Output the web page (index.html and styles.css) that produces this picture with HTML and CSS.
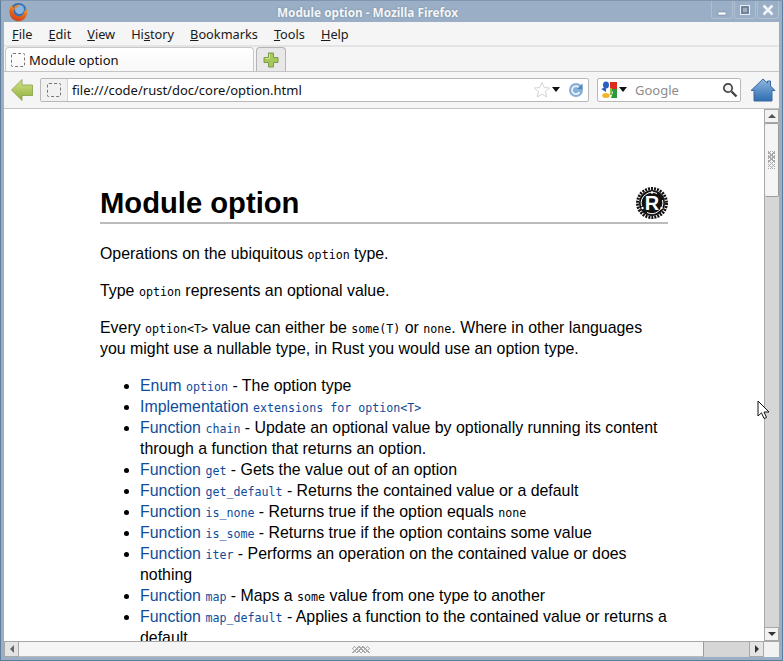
FILE: index.html
```html
<!DOCTYPE html>
<html lang="en">
<head>
<meta charset="utf-8">
<title>Module option - Mozilla Firefox</title>
<link rel="stylesheet" href="styles.css">
</head>
<body>
<div class="window">
  <header class="titlebar">
    <svg class="fx-logo" width="20" height="20" viewBox="0 0 20 20">
      <defs><linearGradient id="fx" x1="0.700" y1="0" x2="0.300" y2="1"><stop offset="0" stop-color="#f6b53a"/><stop offset=".5" stop-color="#e8681c"/><stop offset="1" stop-color="#c9421a"/></linearGradient></defs>
      <circle cx="10.500" cy="9.500" r="8.500" fill="#3c6fae"/>
      <circle cx="11.500" cy="7.500" r="4.500" fill="#8ab6e0"/>
      <path d="M4 2.500C2 5 1 8 1.500 11.500C2.500 16.500 6.500 19.500 11 19.300C15.500 19 18.700 15.500 19 11C19.100 9 18.600 7 17.700 5.500C17.800 7.500 17 9 15.800 10C15.800 12.500 13.500 14.500 10.500 14.300C7.500 14 5.800 12 5.800 9.500C5.800 8 6.500 6.800 7.500 6C6 6 5 5.500 4.700 4.500Z" fill="url(#fx)"/>
      <path d="M6 5.500C7 3.500 9.500 2.500 12 3C10.500 3.500 9.800 4.500 9.800 5.500C8.500 6 7 6 6 5.500Z" fill="#ef8a24"/>
    </svg>
    <div class="title-text">Module option - Mozilla Firefox</div>
    <div class="win-buttons">
      <div class="win-btn"><svg width="12" height="12" viewBox="0 0 12 12"><rect x="2" y="8" width="8" height="3" fill="#fff" stroke="#6f8299" stroke-width=".6"/></svg></div>
      <div class="win-btn"><svg width="12" height="12" viewBox="0 0 12 12"><rect x="1.500" y="1.500" width="9" height="9" fill="none" stroke="#e8eef4" stroke-width="1"/><rect x="3" y="3" width="6" height="6" fill="none" stroke="#5f7288" stroke-width="1.400"/></svg></div>
      <div class="win-btn"><svg width="12" height="12" viewBox="0 0 12 12"><path d="M1.500 1.500L10.500 10.500M10.500 1.500L1.500 10.500" stroke="#f2f5f8" stroke-width="2.600"/></svg></div>
    </div>
  </header>

  <div class="chrome">
    <nav class="menubar">
      <span><u>F</u>ile</span>
      <span><u>E</u>dit</span>
      <span><u>V</u>iew</span>
      <span>Hi<u>s</u>tory</span>
      <span><u>B</u>ookmarks</span>
      <span><u>T</u>ools</span>
      <span><u>H</u>elp</span>
    </nav>

    <div class="tabbar">
      <div class="tab">
        <span class="favicon"></span>
        <span>Module option</span>
      </div>
      <div class="newtab">
        <svg width="18" height="18" viewBox="0 0 18 18"><path d="M6.500 2H11.500V6.500H16V11.500H11.500V16H6.500V11.500H2V6.500H6.500Z" fill="#a6c85a" stroke="#7d9a46" stroke-width="1"/><path d="M7.500 3V7.500H3" fill="none" stroke="#cfe39a"/></svg>
      </div>
    </div>

    <div class="navbar">
      <svg class="back" width="24" height="24" viewBox="0 0 24 24"><defs><linearGradient id="bk" x1="0" y1="0" x2="0" y2="1"><stop offset="0" stop-color="#d5e48a"/><stop offset="1" stop-color="#8fae3a"/></linearGradient></defs><path d="M1.500 12L12 1.500V7H22.500V17.500H12V22.500Z" fill="url(#bk)" stroke="#87a04a" stroke-width=".8"/></svg>
      <div class="urlbar">
        <div class="identity"><span class="favicon"></span></div>
        <div class="url">file:///code/rust/doc/core/option.html</div>
        <svg class="star" width="18" height="18" viewBox="0 0 18 18"><path d="M9 1.500L11.200 6.500L16.600 7L12.500 10.600L13.800 16L9 13.200L4.200 16L5.500 10.600L1.400 7L6.800 6.500Z" fill="#fff" stroke="#d4d4d4" stroke-width="1"/></svg>
        <span class="drop"></span>
        <svg class="reload" width="16" height="16" viewBox="0 0 16 16"><circle cx="8" cy="8" r="7" fill="#86aed6"/><path d="M11.800 6.800A4 4 0 1 0 11.500 10" fill="none" stroke="#e8f0f8" stroke-width="1.800"/><path d="M9 7H14.500V1.500Z" fill="#4f86bd"/></svg>
      </div>
      <div class="searchbar">
        <svg class="g-logo" width="17" height="18" viewBox="0 0 17 18"><ellipse cx="5" cy="4" rx="3" ry="3.500" fill="#2a5fc0"/><path d="M9 1H16V8H9Z" fill="#dc2a1c"/><path d="M9 8H16V17H10L12 11Z" fill="#2a9a3a"/><path d="M0 8L5 6V11Z" fill="#2a5fc0"/><ellipse cx="5" cy="14.500" rx="3.800" ry="2.500" fill="#eeb82a"/><path d="M9 7H11V14H9Z" fill="#8ab83a"/></svg>
        <span class="drop"></span>
        <div class="search-text">Google</div>
        <svg class="magnifier" width="16" height="16" viewBox="0 0 16 16"><circle cx="6" cy="6" r="4.200" fill="#f4f4f4" stroke="#444" stroke-width="1.700"/><path d="M9.500 9.500L14.500 14.500" stroke="#444" stroke-width="2.400"/></svg>
      </div>
      <svg class="home" width="26" height="24" viewBox="0 0 26 24"><defs><linearGradient id="hm" x1="0" y1="0" x2="0" y2="1"><stop offset="0" stop-color="#8db7e2"/><stop offset="1" stop-color="#2f6cb0"/></linearGradient></defs><path d="M13 1L17.500 5V3H20.500V8L25 12.500H22V23H4V12.500H1Z" fill="url(#hm)" stroke="#3c6a9e" stroke-width="1"/></svg>
    </div>
  </div>

  <div class="viewport">
    <main class="page">
      <div class="doc">
        <div class="heading">
          <h1>Module option</h1>
          <svg class="rust-logo" width="32" height="32" viewBox="0 0 32 32">
            <circle cx="16" cy="16" r="14.500" fill="none" stroke="#111" stroke-width="3" stroke-dasharray="2 1.040"/>
            <circle cx="16" cy="16" r="13" fill="#111"/>
            <path d="M5.500 19A11 11 0 0 1 21 6.500M26.500 13A11 11 0 0 1 11 25.500" fill="none" stroke="#fff" stroke-width="1"/>
            <circle cx="16" cy="5.500" r="1.200" fill="#fff"/>
            <circle cx="25.500" cy="21" r="1.200" fill="#fff"/>
            <circle cx="6.500" cy="21" r="1.200" fill="#fff"/>
            <text x="16" y="23" text-anchor="middle" class="rust-r">R</text>
          </svg>
        </div>
        <p>Operations on the ubiquitous <code>option</code> type.</p>
        <p>Type <code>option</code> represents an optional value.</p>
        <p>Every <code>option&lt;T&gt;</code> value can either be <code>some(T)</code> or <code>none</code>. Where in other languages you might use a nullable type, in Rust you would use an option type.</p>
        <ul>
          <li><a>Enum <code>option</code></a> - The option type</li>
          <li><a>Implementation <code>extensions for option&lt;T&gt;</code></a></li>
          <li><a>Function <code>chain</code></a> - Update an optional value by optionally running its content through a function that returns an option.</li>
          <li><a>Function <code>get</code></a> - Gets the value out of an option</li>
          <li><a>Function <code>get_default</code></a> - Returns the contained value or a default</li>
          <li><a>Function <code>is_none</code></a> - Returns true if the option equals <code>none</code></li>
          <li><a>Function <code>is_some</code></a> - Returns true if the option contains some value</li>
          <li><a>Function <code>iter</code></a> - Performs an operation on the contained value or does nothing</li>
          <li><a>Function <code>map</code></a> - Maps a <code>some</code> value from one type to another</li>
          <li><a>Function <code>map_default</code></a> - Applies a function to the contained value or returns a default</li>
        </ul>
      </div>
      <div class="vscroll">
        <div class="sb-btn"><span class="arrow-up"></span></div>
        <div class="v-thumb"><span class="grip"></span></div>
        <div class="sb-track"></div>
        <div class="sb-btn"><span class="arrow-down"></span></div>
      </div>
    </main>
    <div class="hscroll">
      <div class="sb-btn-h"><span class="arrow-left"></span></div>
      <div class="h-thumb"><span class="grip-h"></span></div>
      <div class="sb-track-h"></div>
      <div class="sb-btn-h"><span class="arrow-right"></span></div>
      <div class="corner"></div>
    </div>
  </div>

  <svg class="cursor" width="14" height="20" viewBox="0 0 14 20"><path d="M1 1V16L4.500 12.800L7 18.500L9.500 17.500L7 12H12Z" fill="#fff" stroke="#111" stroke-width="1"/></svg>
</div>
</body>
</html>
```

FILE: styles.css
```css
* { box-sizing: border-box; }
html, body { margin: 0; height: 100%; overflow: hidden; background: #fff; }
.window {
  position: relative;
  width: 783px;
  height: 661px;
  display: flex;
  flex-direction: column;
  background: #9aafc6;
  border: 1px solid #5f7c9b;
  border-top-color: #7f97b0;
  padding: 0 3px 3px;
  font-family: "Noto Sans", "Open Sans", sans-serif;
  color: #111;
}
.titlebar {
  height: 21px;
  flex: none;
  margin: 0 -3px;
  position: relative;
  display: flex;
  align-items: center;
  justify-content: center;
  padding-right: 48px;
}
.fx-logo { position: absolute; left: 7px; top: 1px; }
.title-text {
  font-size: 11.800px;
  font-weight: 700;
  color: #f4f6f8;
  text-shadow: 0 0 2px #6d839a;
}
.win-buttons { position: absolute; right: 3px; top: 0; display: flex; gap: 1px; }
.win-btn {
  width: 22px;
  height: 18px;
  display: flex;
  align-items: center;
  justify-content: center;
  border: 1px solid #aebfd1;
  border-top: 0;
  border-radius: 0 0 3px 3px;
}
.chrome { flex: none; background: #f5f5f5; }
.menubar {
  height: 25px;
  display: flex;
  align-items: center;
  gap: 16px;
  padding-left: 8px;
  font-size: 12.750px;
  color: #1a1a1a;
  border-bottom: 2px solid #e4e4e4;
}
.tabbar {
  height: 25px;
  display: flex;
  align-items: flex-end;
  gap: 2px;
  padding-left: 1px;
  border-bottom: 1px solid #c4c4c4;
}
.tab {
  width: 249px;
  height: 24px;
  display: flex;
  align-items: center;
  gap: 4px;
  padding-left: 5px;
  font-size: 13px;
  background: linear-gradient(#fff, #f8f8f8);
  border: 1px solid #c8c8c8;
  border-bottom: 0;
  border-radius: 4px 4px 0 0;
}
.favicon {
  display: block;
  width: 14px;
  height: 14px;
  flex: none;
  border: 1px dashed #777;
  border-radius: 2px;
}
.newtab {
  width: 30px;
  height: 24px;
  display: flex;
  align-items: center;
  justify-content: center;
  background: #e8e8e8;
  border: 1px solid #b4b4b4;
  border-bottom: 0;
  border-radius: 4px 4px 0 0;
}
.navbar {
  height: 37px;
  display: flex;
  align-items: center;
  padding: 0 3px 1px 6px;
  border-bottom: 1px solid #c4c4c4;
}
.back { flex: none; margin-right: 6px; }
.urlbar, .searchbar {
  height: 24px;
  display: flex;
  align-items: center;
  background: #fff;
  border: 1px solid #b8b8b8;
  border-radius: 2px;
}
.urlbar { width: 549px; flex: none; margin-right: 8px; }
.identity {
  width: 27px;
  height: 22px;
  display: flex;
  align-items: center;
  justify-content: center;
  flex: none;
  background: #f1f1f1;
  border-right: 1px solid #d4d4d4;
}
.url { flex: 1; padding-left: 4px; font-size: 13px; color: #111; white-space: nowrap; }
.star { flex: none; margin-right: 1px; }
.drop {
  display: block;
  width: 0;
  height: 0;
  flex: none;
  border-left: 4.500px solid transparent;
  border-right: 4.500px solid transparent;
  border-top: 5px solid #111;
}
.reload { flex: none; margin: 0 4px 0 8px; }
.searchbar { width: 144px; flex: none; margin-right: 9px; }
.g-logo { flex: none; margin: 0 1px 0 3px; }
.search-text { flex: 1; padding-left: 8px; font-size: 13px; color: #8c8c8c; }
.magnifier { flex: none; margin-right: 2px; }
.home { flex: none; }
.viewport { flex: 1; min-height: 0; display: flex; flex-direction: column; background: #fff; }
.page { flex: 1; min-height: 0; display: flex; }
.doc {
  flex: 1;
  min-width: 0;
  overflow: hidden;
  padding: 76px 96px 0 96px;
  font-family: "Liberation Sans", Arial, sans-serif;
  font-size: 15.900px;
  line-height: 21px;
  color: #000;
}
.heading {
  position: relative;
  display: flex;
  justify-content: space-between;
  align-items: center;
  height: 39px;
  border-bottom: 2px solid #bbb;
  margin-bottom: 19px;
}
h1 { margin: 0; font-size: 29.200px; line-height: 35px; font-weight: 700; }
.rust-logo { display: block; margin-top: -2px; }
.rust-r { font-family: "Liberation Sans", sans-serif; font-weight: 700; font-size: 20px; fill: #fff; }
p { margin: 0 0 16px; }
code { font-family: "DejaVu Sans Mono", monospace; font-size: 11.650px; line-height: 1; }
ul { margin: 0; padding: 0 0 0 40px; }
a { color: #0f4c9a; }
.vscroll {
  width: 15px;
  flex: none;
  display: flex;
  flex-direction: column;
  background: #d6d6d6;
  border-left: 1px solid #a8a8a8;
}
.sb-btn { height: 14px; flex: none; display: flex; align-items: center; justify-content: center; background: #f2f2f2; border: 1px solid #a8a8a8; border-left: 0; }
.v-thumb {
  height: 74px;
  flex: none;
  display: flex;
  align-items: center;
  justify-content: center;
  background: #f5f5f5;
  border: 1px solid #9c9c9c;
  border-left: 0;
  border-radius: 2px;
}
.grip { width: 7px; height: 18px; background: repeating-linear-gradient(45deg, #aaa 0 1px, transparent 1px 3px), repeating-linear-gradient(-45deg, #aaa 0 1px, transparent 1px 3px); }
.sb-track { flex: 1; }
.arrow-up { width: 0; height: 0; border-left: 4px solid transparent; border-right: 4px solid transparent; border-bottom: 4px solid #555; }
.arrow-down { width: 0; height: 0; border-left: 4px solid transparent; border-right: 4px solid transparent; border-top: 4px solid #333; }
.hscroll {
  height: 16px;
  flex: none;
  display: flex;
  background: #d6d6d6;
  border-top: 1px solid #a8a8a8;
}
.sb-btn-h { width: 15px; flex: none; display: flex; align-items: center; justify-content: center; background: #e4e4e4; border: 1px solid #a8a8a8; border-top: 0; }
.arrow-left { width: 0; height: 0; border-top: 4px solid transparent; border-bottom: 4px solid transparent; border-right: 4px solid #666; }
.arrow-right { width: 0; height: 0; border-top: 4px solid transparent; border-bottom: 4px solid transparent; border-left: 4px solid #333; }
.h-thumb {
  width: 685px;
  flex: none;
  display: flex;
  align-items: center;
  justify-content: center;
  background: #f5f5f5;
  border-right: 1px solid #9c9c9c;
  border-bottom: 1px solid #bbb;
}
.grip-h { width: 18px; height: 7px; background: repeating-linear-gradient(45deg, #aaa 0 1px, transparent 1px 3px), repeating-linear-gradient(-45deg, #aaa 0 1px, transparent 1px 3px); }
.sb-track-h { flex: 1; }
.corner { width: 15px; flex: none; background: #f2f2f2; }
.cursor { position: absolute; left: 756px; top: 399px; }
```
